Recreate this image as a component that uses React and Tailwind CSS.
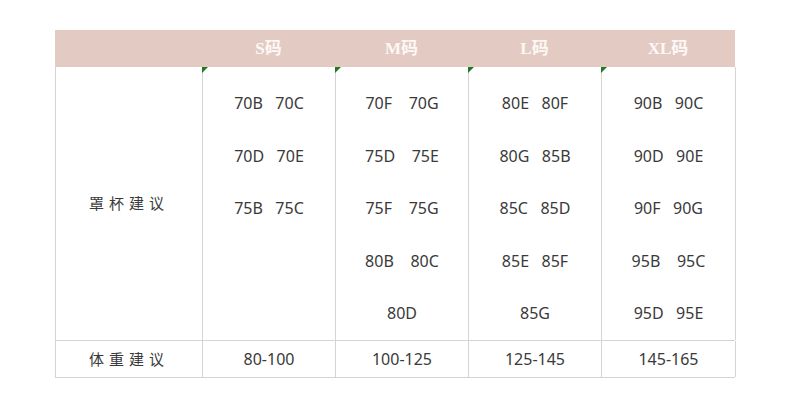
import React from 'react';

const sizes = [
  { name: 'S码', cups: ['70B\u00a0\u00a0\u00a070C', '70D\u00a0\u00a0\u00a070E', '75B\u00a0\u00a0\u00a075C'], weight: '80-100' },
  { name: 'M码', cups: ['70F\u00a0\u00a0\u00a0\u00a070G', '75D\u00a0\u00a0\u00a0\u00a075E', '75F\u00a0\u00a0\u00a0\u00a075G', '80B\u00a0\u00a0\u00a0\u00a080C', '80D'], weight: '100-125' },
  { name: 'L码', cups: ['80E\u00a0\u00a0\u00a080F', '80G\u00a0\u00a0\u00a085B', '85C\u00a0\u00a0\u00a085D', '85E\u00a0\u00a0\u00a085F', '85G'], weight: '125-145' },
  { name: 'XL码', cups: ['90B\u00a0\u00a0\u00a090C', '90D\u00a0\u00a0\u00a090E', '90F\u00a0\u00a0\u00a090G', '95B\u00a0\u00a0\u00a0\u00a095C', '95D\u00a0\u00a0\u00a095E'], weight: '145-165' },
];

const cellFont = { fontFamily: '"Noto Sans", "Noto Sans CJK SC", sans-serif' };

function Marker() {
  return (
    <svg className="absolute -left-px top-0" width="6" height="6" viewBox="0 0 6 6">
      <polygon points="0,0 6,0 0,6" fill="#1e7a1e" />
    </svg>
  );
}

export default function App() {
  return (
    <div className="w-[790px] h-[412px] bg-white pt-[30px] pl-[55px]" style={cellFont}>
      <div className="w-[680px]">
        {/* header */}
        <div className="grid grid-cols-[147px_133px_133px_133px_134px] h-[37px] bg-[#e3cbc4]">
          <div />
          {sizes.map((s) => (
            <div
              key={s.name}
              className="flex items-center justify-center text-[#fdf8f6] font-bold text-[17px]"
              style={{ fontFamily: '"Liberation Serif", "Noto Sans CJK SC", serif' }}
            >
              {s.name}
            </div>
          ))}
        </div>

        {/* cup row */}
        <div className="grid grid-cols-[147px_133px_133px_133px_134px] h-[273px] border-l border-[#d4d4d4]">
          <div className="flex items-center justify-center border-r border-[#d4d4d4] text-[15px] text-[#3a3a3a] tracking-[5px]">
            罩杯建议
          </div>
          {sizes.map((s) => (
            <div key={s.name} className="relative flex flex-col items-center border-r border-[#d4d4d4] pt-[26px] gap-[32.5px]">
              <Marker />
              {s.cups.map((c) => (
                <div key={c} className="leading-[20px] text-[16px] text-[#3a3a3a]">{c}</div>
              ))}
            </div>
          ))}
        </div>

        {/* weight row */}
        <div className="grid grid-cols-[147px_133px_133px_133px_134px] h-[38px] border-l border-t border-b border-[#d4d4d4]">
          <div className="flex items-center justify-center border-r border-[#d4d4d4] text-[15px] text-[#3a3a3a] tracking-[5px]">
            体重建议
          </div>
          {sizes.map((s) => (
            <div key={s.name} className="flex items-center justify-center border-r border-[#d4d4d4] text-[16px] text-[#3a3a3a]">
              {s.weight}
            </div>
          ))}
        </div>
      </div>
    </div>
  );
}
